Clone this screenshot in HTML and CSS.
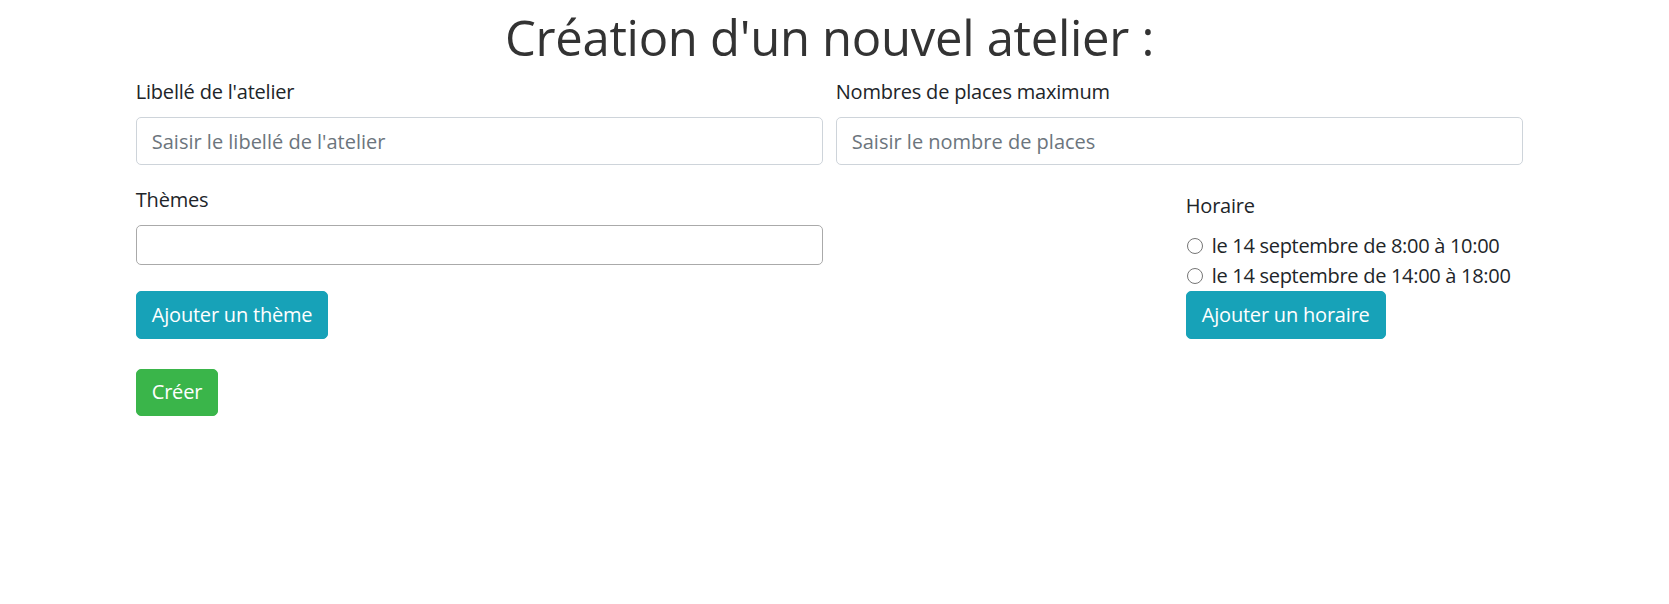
FILE: index.html
```html
<!DOCTYPE html>
<html lang="fr">
<head>
<meta charset="utf-8">
<title>Création d'un nouvel atelier</title>
<link rel="stylesheet" href="styles.css">
</head>
<body>
<div class="container">
  <h1 class="title">Création d'un nouvel atelier :</h1>
  <form class="form">
    <div class="row-top">
      <div class="group">
        <label class="label">Libellé de l'atelier</label>
        <input class="control" type="text" placeholder="Saisir le libellé de l'atelier">
      </div>
      <div class="group">
        <label class="label">Nombres de places maximum</label>
        <input class="control" type="text" placeholder="Saisir le nombre de places">
      </div>
    </div>
    <div class="row-mid">
      <div class="col-themes">
        <label class="label">Thèmes</label>
        <div class="multi"></div>
        <button type="button" class="btn btn-info">Ajouter un thème</button>
      </div>
      <div class="col-horaire">
        <label class="label">Horaire</label>
        <div class="radios">
          <label class="radio-line"><input type="radio" name="h" class="radio"><span>le 14 septembre de 8:00 à 10:00</span></label>
          <label class="radio-line"><input type="radio" name="h" class="radio"><span>le 14 septembre de 14:00 à 18:00</span></label>
        </div>
        <button type="button" class="btn btn-info">Ajouter un horaire</button>
      </div>
    </div>
    <div class="row-submit">
      <button type="button" class="btn btn-success">Créer</button>
    </div>
  </form>
</div>
</body>
</html>
```

FILE: styles.css
```css
* { box-sizing: border-box; }

html, body {
  margin: 0;
  background: #fff;
}

body {
  padding-right: 10px;
  font-family: "Open Sans", "Noto Sans", sans-serif;
  font-size: 20px;
  line-height: 30px;
  letter-spacing: -0.2px;
  color: #212529;
}

.container {
  width: 1387.5px;
  margin: 0 auto;
}

.title {
  margin: 7px 0 10px;
  font-size: 49px;
  line-height: 60px;
  font-weight: 400;
  text-align: center;
  color: #333;
  letter-spacing: -0.3px;
}

.form { margin: 0; }

.label {
  display: block;
  margin: 0 0 10px;
  font-size: 20px;
  line-height: 30px;
  letter-spacing: -0.2px;
}

.row-top {
  display: grid;
  grid-template-columns: 1fr 1fr;
  column-gap: 12.5px;
  margin-bottom: 20px;
}

.group { display: flex; flex-direction: column; }

.control {
  display: block;
  width: 100%;
  height: 48px;
  padding: 7.5px 15px;
  font-family: inherit;
  font-size: 20px;
  line-height: 30px;
  letter-spacing: 0;
  color: #495057;
  background: #fff;
  border: 1px solid #ced4da;
  border-radius: 5px;
  outline: none;
}

.control::placeholder { color: #6c757d; opacity: 1; }

.row-mid {
  display: grid;
  grid-template-columns: repeat(4, 1fr);
  column-gap: 12.5px;
  align-items: end;
}

.col-themes {
  grid-column: 1 / span 2;
  display: flex;
  flex-direction: column;
  align-items: flex-start;
}

.multi {
  width: 100%;
  height: 40px;
  border: 1px solid #aaa;
  border-radius: 5px;
  background: #fff;
  margin-bottom: 26px;
}

.col-horaire {
  grid-column: 4 / span 1;
  display: flex;
  flex-direction: column;
  align-items: flex-start;
}

.radios {
  display: flex;
  flex-direction: column;
}

.radio-line {
  display: flex;
  align-items: center;
  height: 30px;
  white-space: nowrap;
  letter-spacing: -0.3px;
}

.radio {
  appearance: none;
  -webkit-appearance: none;
  width: 16px;
  height: 16px;
  margin: 0 9px 0 1px;
  border: 1.3px solid #767676;
  border-radius: 50%;
  background: #fff;
  flex: none;
}

.btn {
  display: inline-block;
  height: 47.5px;
  padding: 7.5px 15px;
  font-family: inherit;
  font-size: 20px;
  line-height: 30px;
  letter-spacing: -0.2px;
  color: #fff;
  border: 1px solid transparent;
  border-radius: 5px;
  cursor: pointer;
}

.btn-info {
  background: #17a2b8;
  border-color: #17a2b8;
}

.btn-success {
  background: #3ab54a;
  border-color: #3ab54a;
}

.row-submit {
  margin-top: 30px;
}
```
